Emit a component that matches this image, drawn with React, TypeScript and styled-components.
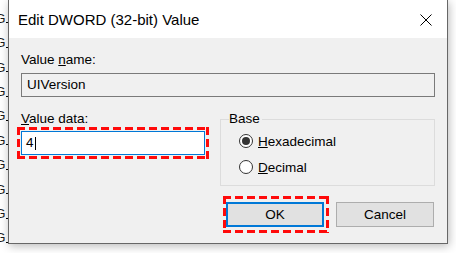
import React from 'react';
import styled, { createGlobalStyle } from 'styled-components';

const GlobalStyle = createGlobalStyle`
  html, body {
    margin: 0;
    padding: 0;
    background: #ffffff;
  }
  body {
    font-family: "Liberation Sans", Arial, sans-serif;
  }
`;

const Desktop = styled.div`
  display: flex;
  align-items: flex-start;
  width: 456px;
  height: 253px;
  overflow: hidden;
  background: #ffffff;
`;

// the sheet peeking out behind the dialog
const SheetEdge = styled.div`
  width: 8px;
  flex: none;
  overflow: hidden;
  padding-top: 1px;
`;

const SheetRow = styled.div`
  display: flex;
  align-items: flex-end;
  height: 24.4px;
`;

const SheetGlyph = styled.span`
  margin-left: -5px;
  font-size: 13.5px;
  line-height: 1;
  color: #1a1a1a;
`;

const SheetTick = styled.span`
  width: 3px;
  height: 1px;
  margin-bottom: 2px;
  background: #000;
`;

const Dialog = styled.section`
  width: 440px;
  height: 244px;
  flex: none;
  box-sizing: border-box;
  display: flex;
  flex-direction: column;
  border: 1px solid #676767;
  border-top: none;
  background: #f0f0f0;
  box-shadow: 1px 2px 9px rgba(0, 0, 0, 0.28);
  color: #000;
`;

const TitleBar = styled.header`
  height: 37px;
  flex: none;
  display: flex;
  align-items: center;
  justify-content: space-between;
  padding: 1px 15px 0 9px;
  background: #ffffff;
`;

const Title = styled.h1`
  margin: 0;
  font-size: 15px;
  font-weight: 400;
  color: #000;
`;

const CloseIcon = styled.svg`
  width: 12px;
  height: 12px;
  display: block;
`;

const Body = styled.div`
  flex: 1;
  padding: 14px 12px 0 12px;
  font-size: 13.5px;
`;

const Label = styled.div`
  line-height: 16px;
  height: 16px;
`;

const Field = styled.div<{ $readOnly?: boolean }>`
  box-sizing: border-box;
  height: 24px;
  display: flex;
  align-items: center;
  padding-left: ${p => (p.$readOnly ? '5px' : '4px')};
  border: 1px solid ${p => (p.$readOnly ? '#7a7a7a' : '#0078d7')};
  background: ${p => (p.$readOnly ? '#f0f0f0' : '#ffffff')};
  line-height: 16px;
`;

const NameField = styled(Field)`
  margin-top: 5px;
`;

const Caret = styled.span`
  width: 1px;
  height: 13px;
  margin-left: 1px;
  background: #000;
`;

const Columns = styled.div`
  display: grid;
  grid-template-columns: 184px 215px;
  column-gap: 15px;
  margin-top: 14px;
  align-items: start;
`;

const DataColumn = styled.div`
  display: flex;
  flex-direction: column;
`;

// red dashed annotation drawn around a control (3px stroke, 8px dashes)
const dashX = 'repeating-linear-gradient(90deg, #ff0a0a 0 8px, transparent 8px 12px)';
const dashY = 'repeating-linear-gradient(180deg, #ff0a0a 0 8px, transparent 8px 12px)';

const Highlight = styled.div<{ $pad: string; $pull: string }>`
  padding: ${p => p.$pad};
  margin: ${p => p.$pull};
  background:
    ${dashX} left top / 100% 3px no-repeat,
    ${dashX} left bottom / 100% 3px no-repeat,
    ${dashY} left top / 3px 100% no-repeat,
    ${dashY} right top / 3px 100% no-repeat;
`;

const GroupBox = styled.fieldset`
  margin: 0;
  padding: 1px 0 5px 18px;
  border: 1px solid #dcdcdc;
  min-width: 0;
`;

const Legend = styled.legend`
  margin-left: -10px;
  padding: 0 2px 0 0;
  line-height: 16px;
`;

const RadioRow = styled.label`
  display: flex;
  align-items: center;
  gap: 5px;
  height: 26px;
`;

const RadioCircle = styled.span<{ $checked?: boolean }>`
  box-sizing: border-box;
  width: 14px;
  height: 14px;
  border-radius: 50%;
  border: 1px solid #333;
  background: #fff;
  display: flex;
  align-items: center;
  justify-content: center;

  &::after {
    content: '';
    width: 8px;
    height: 8px;
    border-radius: 50%;
    background: ${p => (p.$checked ? '#333' : 'transparent')};
  }
`;

const ButtonRow = styled.div`
  display: flex;
  justify-content: flex-end;
  align-items: center;
  margin-top: 16px;
  padding-right: 1px;
`;

const Button = styled.button<{ $default?: boolean }>`
  box-sizing: border-box;
  width: 98px;
  height: 25px;
  margin: 0;
  padding: 0;
  display: block;
  font-family: inherit;
  font-size: 13.5px;
  color: #000;
  background: #e1e1e1;
  border: ${p => (p.$default ? '2px solid #0078d7' : '1px solid #adadad')};
`;

const CancelButton = styled(Button)`
  margin-left: 12px;
`;

const App = () => {
  const sheetRows = Array.from({ length: 10 });

  return (
    <>
      <GlobalStyle />
      <Desktop>
        <SheetEdge>
          {sheetRows.map((_, i) => (
            <SheetRow key={i}>
              <SheetGlyph>G</SheetGlyph>
              <SheetTick />
            </SheetRow>
          ))}
        </SheetEdge>
        <Dialog>
          <TitleBar>
            <Title>Edit DWORD (32-bit) Value</Title>
            <CloseIcon viewBox="0 0 12 12">
              <path d="M0.5 0.5 L11.5 11.5 M11.5 0.5 L0.5 11.5" stroke="#000" strokeWidth="1" />
            </CloseIcon>
          </TitleBar>
          <Body>
            <Label>
              Value <u>n</u>ame:
            </Label>
            <NameField $readOnly>UIVersion</NameField>
            <Columns>
              <DataColumn>
                <Label>
                  <u>V</u>alue data:
                </Label>
                <Highlight $pad="4px" $pull="0 -4px">
                  <Field>
                    4<Caret />
                  </Field>
                </Highlight>
              </DataColumn>
              <GroupBox>
                <Legend>Base</Legend>
                <RadioRow>
                  <RadioCircle $checked />
                  <span>
                    <u>H</u>exadecimal
                  </span>
                </RadioRow>
                <RadioRow>
                  <RadioCircle />
                  <span>
                    <u>D</u>ecimal
                  </span>
                </RadioRow>
              </GroupBox>
            </Columns>
            <ButtonRow>
              <Highlight $pad="6px 5px 6px 3px" $pull="-6px -5px -6px -3px">
                <Button $default>OK</Button>
              </Highlight>
              <CancelButton>Cancel</CancelButton>
            </ButtonRow>
          </Body>
        </Dialog>
      </Desktop>
    </>
  );
};

export default App;
